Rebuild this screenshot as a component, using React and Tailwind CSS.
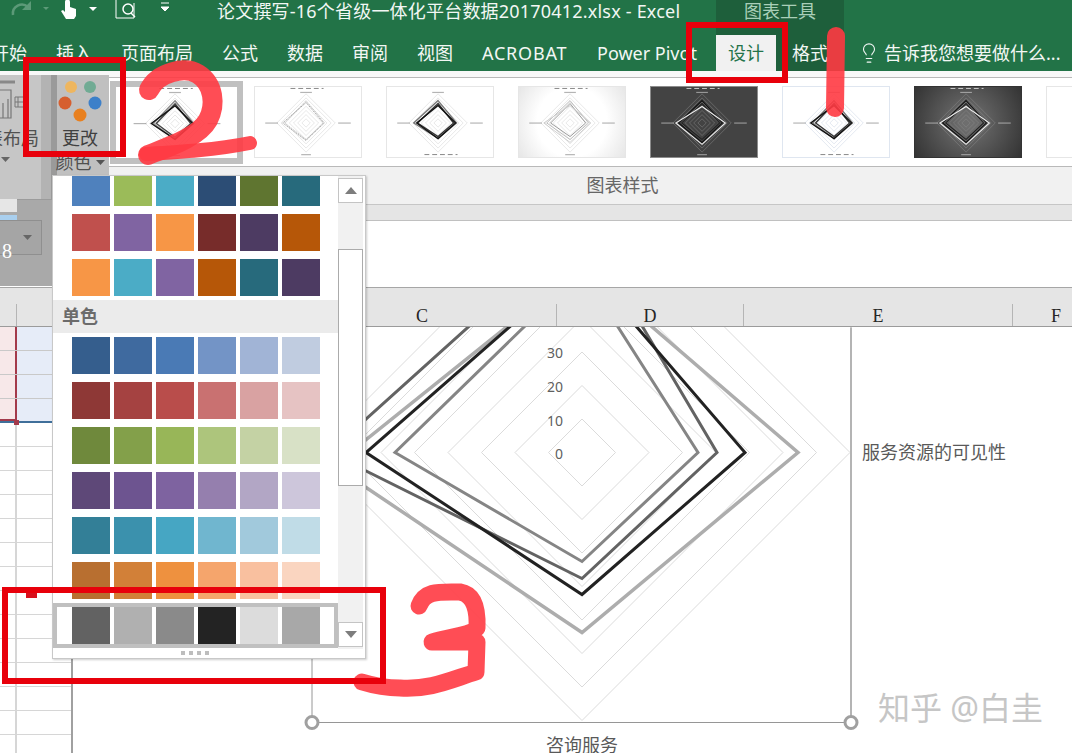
import React from 'react';
import { Lightbulb } from 'lucide-react';

const swatchRows = {
  top: [
    ['#4f81bd', '#9bbb59', '#4bacc6', '#2c4d75', '#5f7530', '#276a7c'],
    ['#c0504d', '#8064a2', '#f79646', '#772c2a', '#4d3b62', '#b65708'],
    ['#f79646', '#4bacc6', '#8064a2', '#b65708', '#276a7c', '#4d3b62'],
  ],
  mono: [
    ['#355e8d', '#3f6a9f', '#4a7ab5', '#7394c6', '#a1b4d6', '#c0cce0'],
    ['#8e3836', '#a54241', '#b94d4b', '#c97171', '#d9a2a2', '#e6c3c3'],
    ['#6f893c', '#83a04a', '#98b658', '#adc57c', '#c4d2a4', '#d8e1c6'],
    ['#5e4878', '#6d5490', '#7e63a0', '#957fae', '#b2a6c5', '#cdc6db'],
    ['#337f97', '#3b91ad', '#46a6c3', '#70b6cf', '#a1c9dc', '#c0dce7'],
    ['#b86f30', '#d28038', '#ee913f', '#f5a56c', '#f9c09f', '#fad5c0'],
  ],
  gray: ['#626262', '#b0b0b0', '#8a8a8a', '#232323', '#dcdcdc', '#a8a8a8'],
};

const tabs = [
  { label: '插入', cls: 'w-[36px]' },
  { label: '页面布局', cls: 'w-[72px]' },
  { label: '公式', cls: 'w-[36px]' },
  { label: '数据', cls: 'w-[36px]' },
  { label: '审阅', cls: 'w-[36px]' },
  { label: '视图', cls: 'w-[36px]' },
  { label: 'ACROBAT', cls: 'w-[86px] tracking-[0.8px]' },
  { label: 'Power Pivot', cls: 'w-[100px]' },
];

const thumbs = [
  { box: 'bg-white border-[#e6e6e6]', ring: '#cfcfcf', mark: '#777', legend: 'top', width: 0.9, series: [[23, 19, 17, 22, '#bbb'], [21, 18, 18, 24, '#999']], dash: true },
  { box: 'bg-white border-[#e6e6e6]', ring: '#cfcfcf', mark: '#777', legend: 'bottom', width: 1.4, series: [[23, 19, 16, 25, '#777'], [20, 16, 14, 21, '#333'], [18, 18, 16, 22, '#111']] },
  { box: 'bg-[radial-gradient(circle,#ffffff_55%,#e6e6e6_100%)] border-[#e6e6e6]', ring: '#cfcfcf', mark: '#777', legend: 'top', width: 1, series: [[23, 19, 17, 24, '#bbb'], [20, 16, 14, 20, '#999'], [18, 21, 20, 27, '#ccc']] },
  { box: 'bg-[#434343] border-[#8c8c8c]', ring: '#8a8a8a', mark: '#ddd', legend: 'top', width: 1.1, series: [[23, 21, 20, 24, '#111'], [20, 18, 17, 21, '#222'], [17, 24, 22, 27, '#eee']] },
  { box: 'bg-white border-[#dfe6f0]', ring: '#c6d2e2', mark: '#777', legend: 'bottom', width: 1.4, series: [[23, 19, 16, 22, '#777'], [20, 16, 14, 19, '#333'], [18, 18, 16, 24, '#111']] },
  { box: 'bg-[radial-gradient(circle,#6e6e6e_10%,#333333_100%)] border-[#333333]', ring: '#8a8a8a', mark: '#ddd', legend: 'top', width: 1.1, series: [[23, 21, 20, 24, '#111'], [20, 18, 17, 21, '#222'], [17, 24, 22, 27, '#eee']] },
];

// points of a radar polygon, given the reach on each of the four axes
const diamond = (cx, cy, t, r, b, l) =>
  `${cx},${cy - t} ${cx + r},${cy} ${cx},${cy + b} ${cx - l},${cy}`;

const MiniRadar = ({ ring, mark, series, dash, legend, width }) => (
  <svg viewBox="0 0 108 72" className="block w-full h-full">
    {[4.300, 8.600, 12.900, 17.200, 21.500, 25.800, 30].map((r) => (
      <polygon key={r} points={diamond(52, 37, r, r, r, r)} fill="none" stroke={ring} strokeWidth="0.5" />
    ))}
    {series.map(([t, r, b, l, c], i) => (
      <polygon
        key={i}
        points={diamond(52, 37, t, r, b, l)}
        fill="none"
        stroke={c}
        strokeWidth={width}
        strokeDasharray={dash ? '1.5 0.8' : undefined}
      />
    ))}
    {/* labels too small to read in the gallery */}
    <path
      d={legend === 'top' ? 'M36 1.500H70' : 'M38 69.500H72'}
      stroke={mark}
      strokeWidth="0.9"
      strokeDasharray="5 3"
    />
    <rect x="46" y="5" width="12" height="1.200" fill={mark} opacity="0.55" />
    {legend === 'top' && <rect x="47" y="69" width="10" height="1.200" fill={mark} opacity="0.55" />}
    <rect x="10" y="36.500" width="13" height="1.200" fill={mark} opacity="0.55" />
    <rect x="85" y="36.500" width="13" height="1.200" fill={mark} opacity="0.55" />
  </svg>
);

const SwatchRow = ({ colors }) => (
  <div className="flex gap-[4.5px] h-full">
    {colors.map((c, i) => (
      <div key={i} className="w-[37.5px] h-full" style={{ backgroundColor: c }} />
    ))}
  </div>
);

const GridRow = ({ selected }) => (
  <div className={`flex h-[24px] shrink-0 border-b ${selected ? 'border-[#c9c9c9]' : 'border-[#d6d6d6]'}`}>
    <div className={`w-[17px] shrink-0 border-r-2 ${selected ? 'bg-[#f7e8e9] border-[#a33a4b]' : 'border-[#d6d6d6]'}`} />
    <div className={`flex-1 ${selected ? 'bg-[#e6ecf8]' : ''}`} />
  </div>
);

const Chart = () => (
  <svg viewBox="73 328 999 425" className="block w-full h-full">
    {[33.5, 67, 100.5, 134, 167.5, 201, 234.5, 268].map((r) => (
      <polygon key={r} points={diamond(582, 453, r, r, r, r)} fill="none" stroke="#dbdbdb" strokeWidth="1" />
    ))}
    <path d="M312 650V723H851V328" fill="none" stroke="#969696" strokeWidth="1" />
    <path d="M851 328V723" fill="none" stroke="#b4b4b4" strokeWidth="2" />
    <polygon points="582,267 798,453 582,633 314,453 350,453" fill="none" stroke="#adadad" strokeWidth="3.5" />
    <polygon points={diamond(582, 453, 228, 135, 126, 253)} fill="none" stroke="#636363" strokeWidth="3" />
    <polygon points={diamond(582, 453, 182, 116, 109, 187)} fill="none" stroke="#858585" strokeWidth="3" />
    <polygon points={diamond(582, 453, 189, 163, 142, 216)} fill="none" stroke="#222222" strokeWidth="3" />
    <g fill="#606060" fontSize="14" textAnchor="end">
      <text x="563" y="358">30</text>
      <text x="563" y="392">20</text>
      <text x="563" y="426">10</text>
      <text x="563" y="459">0</text>
    </g>
    <text x="862" y="459" fill="#595959" fontSize="18">服务资源的可见性</text>
    <text x="546" y="752" fill="#595959" fontSize="18">咨询服务</text>
    <circle cx="312" cy="723" r="6" fill="#ffffff" stroke="#a0a0a0" strokeWidth="3" />
    <circle cx="851" cy="723" r="6" fill="#ffffff" stroke="#a0a0a0" strokeWidth="3" />
  </svg>
);

const TitleIcons = () => (
  <svg width="217" height="35" viewBox="0 0 217 35" className="shrink-0">
    <path d="M13 15a9 9 0 0 1 15-8" fill="none" stroke="#5c9a78" strokeWidth="2.5" />
    <path d="M31 1v9h-9z" fill="#5c9a78" />
    <path d="M43 7h6l-3 3z" fill="#5c9a78" />
    <path d="M65 2a2.5 2.5 0 0 1 5 0v5l6 2v7l-2 3h-8l-5-8 2-1 2 2z" fill="#ffffff" />
    <path d="M89 7h8l-4 4z" fill="#ffffff" />
    <path d="M116 0v18h18V3" fill="none" stroke="#ffffff" strokeWidth="1" />
    <circle cx="128" cy="9" r="5" fill="none" stroke="#ffffff" strokeWidth="1.5" />
    <path d="M131 13l4 4" stroke="#ffffff" strokeWidth="1.5" />
    <path d="M161 3h8M161 7h8l-4 4z" stroke="#ffffff" strokeWidth="1" fill="#ffffff" />
  </svg>
);

const DimmedPanel = () => (
  <div className="absolute left-0 top-[75px] w-[57px] h-[211px] bg-[#a9a9a9] overflow-hidden">
    <div className="flex h-[125px] border-b border-[#9b9b9b]">
      <div className="w-[41px] shrink-0 bg-[#c6c6c6] flex flex-col">
        <svg width="41" height="48" viewBox="0 0 41 48" className="shrink-0">
          <path d="M0 7H15" fill="none" stroke="#888" strokeWidth="3" />
          <path d="M0 15H11V43H0M3 28V43M8 24V43" fill="none" stroke="#777" strokeWidth="1.2" />
          <path d="M15 22H24V32H15ZM15 27H24M18 22V32" fill="none" stroke="#777" strokeWidth="1" />
        </svg>
        <span className="-ml-[15px] mt-[3px] text-[18px] leading-[24px] text-[#505050] whitespace-nowrap">表布局</span>
        <svg width="10" height="6" className="ml-[1px] mt-[7px]"><path d="M0 0h9l-4.500 5z" fill="#666" /></svg>
      </div>
      <div className="w-[10px] bg-[#b3b3b3]" />
      <div className="flex-1 bg-[#9a9a9a]" />
    </div>
    <div className="w-[17px] h-[14px] -mt-[2px] bg-[#e6e6e6]" />
    <div className="mt-[3px] w-[17px] h-[8px] bg-[#a9cfee]" />
    <div className="-mt-[3px] w-[42px] h-[35px] border border-[#8f8f8f] border-l-0 bg-[#a5a5a5] flex items-start justify-between pl-[2px] pr-[8px]">
      <span className="font-['Liberation_Serif',serif] text-[20px] leading-[24px] mt-[18px] text-white">8</span>
      <svg width="10" height="6" className="mt-[14px]"><path d="M0 0h9l-4.500 5z" fill="#666" /></svg>
    </div>
  </div>
);

const ChangeColorButton = () => (
  <div className="absolute left-[57px] top-[75px] w-[52px] h-[101px] bg-[#c0c0c0] flex flex-col items-center pr-[6px]">
    <svg width="52" height="50" viewBox="57 75 52 50" className="shrink-0 -mr-[6px]">
      <circle cx="71" cy="87" r="6" fill="#eeb65f" />
      <circle cx="90" cy="87" r="6" fill="#71ab94" />
      <circle cx="65" cy="103" r="6.500" fill="#d65f2f" />
      <circle cx="95" cy="103" r="6.500" fill="#3d80c9" />
      <circle cx="80" cy="115" r="6.500" fill="#e8801f" />
    </svg>
    <span className="text-[18px] leading-[24px] mt-[1px] text-[#404040] whitespace-nowrap">更改</span>
    <span className="flex items-center gap-[4px] text-[18px] leading-[24px] text-[#505050] whitespace-nowrap shrink-0">
      颜色
      <svg width="9" height="5" className="shrink-0"><path d="M0 0h9l-4.500 5z" fill="#555" /></svg>
    </span>
  </div>
);

const ScrollButton = ({ up }) => (
  <div className="h-[25px] border border-[#c4c4c4] bg-white flex items-center justify-center">
    <svg width="12" height="7">
      <path d={up ? 'M6 0l6 7H0z' : 'M0 0h12L6 7z'} fill="#7d7d7d" />
    </svg>
  </div>
);

const ColorPopup = () => (
  <div className="absolute left-[52px] top-[175px] w-[314px] h-[484px] bg-white border border-[#c8c8c8] shadow-[1px_1px_2px_rgba(0,0,0,0.2)] flex flex-col overflow-hidden">
    <div className="flex h-[473px] shrink-0">
      <div className="w-[285px] shrink-0 flex flex-col">
        <div className="h-[30px] pl-[19px]"><SwatchRow colors={swatchRows.top[0]} /></div>
        <div className="h-[37px] mt-[8px] pl-[19px]"><SwatchRow colors={swatchRows.top[1]} /></div>
        <div className="h-[37px] mt-[8px] pl-[19px]"><SwatchRow colors={swatchRows.top[2]} /></div>
        <div className="h-[33px] mt-[4px] bg-[#ebebeb] flex items-center pl-[9px] text-[18px] font-bold text-[#6b6b6b]">单色</div>
        <div className="mt-[4px] flex flex-col gap-[8px]">
          {swatchRows.mono.map((row, i) => (
            <div key={i} className="h-[37px] pl-[19px]"><SwatchRow colors={row} /></div>
          ))}
        </div>
        <div className="h-[45px] mt-[4px] border-[4px] border-[#c0c0c0] pl-[15px]">
          <SwatchRow colors={swatchRows.gray} />
        </div>
      </div>
      <div className="w-[25px] shrink-0 bg-[#f1f1f1] flex flex-col">
        <div className="mt-[2px]"><ScrollButton up /></div>
        <div className="h-[237px] mt-[46px] border border-[#ababab] bg-white" />
        <div className="mt-[136px]"><ScrollButton /></div>
      </div>
    </div>
    <div className="flex justify-center gap-[4px] pr-[28px] pt-[2px]">
      {[0, 1, 2, 3].map((i) => (
        <div key={i} className="w-[4px] h-[4px] bg-[#bdbdbd]" />
      ))}
    </div>
  </div>
);

const Scribbles = () => (
  <svg viewBox="0 0 1072 753" className="absolute inset-0 w-full h-full pointer-events-none">
    <g fill="none" stroke="#ff3a42" strokeOpacity="0.9" strokeLinecap="round" strokeLinejoin="round">
      <path strokeWidth="20" d="M149 90C158 72 185 66 198 74C214 84 216 105 208 120C198 138 165 148 148 155" />
      <path strokeWidth="14" d="M146 154C180 152 215 150 250 143" />
      <path strokeWidth="18" d="M836 36L835 108" />
      <path strokeWidth="17" d="M419 606C425 590 440 592 460 592C472 594 478 605 477 628C470 636 450 636 432 642H477L476 672C450 680 430 690 400 688C385 688 375 686 362 682" />
    </g>
  </svg>
);

export default function App() {
  return (
    <div className="relative w-[1072px] h-[753px] overflow-hidden bg-white flex flex-col font-['Noto_Sans','Noto_Sans_CJK_SC',sans-serif]">
      {/* title bar */}
      <div className="flex h-[35px] shrink-0 bg-[#227347] text-white">
        <TitleIcons />
        <div className="w-[499px] shrink-0 text-[18px] leading-[22px] tracking-[0.2px] whitespace-nowrap text-[#f2f7f4]">
          论文撰写-16个省级一体化平台数据20170412.xlsx - Excel
        </div>
        <div className="w-[128px] shrink-0 bg-[#1e5f3b] text-center text-[18px] leading-[22px] text-[#a9cfb8]">图表工具</div>
      </div>

      {/* ribbon tabs */}
      <div className="flex h-[36px] shrink-0 bg-[#227347] text-[18px] text-[#f2f7f4] items-stretch">
        <div className="-ml-[9px] w-[36px] shrink-0 leading-[36px]">开始</div>
        {tabs.map((t) => (
          <div key={t.label} className={`ml-[29px] shrink-0 leading-[36px] whitespace-nowrap ${t.cls}`}>{t.label}</div>
        ))}
        <div className="ml-[19px] w-[60px] shrink-0 bg-[#f1f1f1] text-[#24734a] text-center leading-[36px]">设计</div>
        <div className="w-[68px] shrink-0 bg-[#1e5f3b] pl-[16px] leading-[36px]">格式</div>
        <div className="ml-[14px] flex items-center gap-[4px] whitespace-nowrap">
          <Lightbulb size={22} strokeWidth={1.2} />
          <span>告诉我您想要做什么...</span>
        </div>
      </div>

      <div className="h-[6px] shrink-0 bg-[#f8f8f8]" />

      {/* chart styles gallery */}
      <div className="flex items-center h-[90px] shrink-0 pl-[110px] gap-[11px] bg-white border-y border-[#b9b9b9]">
        <div className="w-[133px] h-[83px] shrink-0 border-[6px] border-[#c0c0c0] flex justify-center items-center bg-white">
          <div className="w-[108px] h-[71px]">
            <MiniRadar ring="#cfcfcf" mark="#777" legend="top" width={1.4} series={[[23, 19, 16, 22, '#888'], [20, 16, 14, 19, '#444'], [18, 18, 16, 24, '#111']]} />
          </div>
        </div>
        <div className="flex gap-[24px] shrink-0">
          {thumbs.map((t, i) => (
            <div key={i} className={`w-[108px] h-[72px] shrink-0 border ${t.box}`}>
              <MiniRadar ring={t.ring} mark={t.mark} series={t.series} dash={t.dash} legend={t.legend} width={t.width} />
            </div>
          ))}
          <div className="w-[108px] h-[72px] shrink-0 border border-[#e6e6e6] bg-white" />
        </div>
      </div>

      <div className="h-[38px] shrink-0 bg-[#f1f1f1] flex items-center justify-center pl-[173px] text-[18px] text-[#666666] border-b border-[#c6c6c6]">
        图表样式
      </div>
      <div className="h-[16px] shrink-0 bg-[#e5e5e5] border-b border-[#c0c0c0]" />
      <div className="h-[66px] shrink-0 bg-white" />

      {/* column headers */}
      <div className="flex h-[40px] shrink-0 bg-[#e5e5e5] border-y border-[#a6a6a6] border-b-[#9b9b9b] font-['Liberation_Serif',serif] text-[18px] leading-[24px] text-[#262626] items-end">
        <div className="w-[17px] h-[22px] shrink-0 border-r border-[#b5b5b5]" />
        <div className="w-[540px] shrink-0 h-[22px] border-r border-[#b5b5b5] text-center pl-[271px]">C</div>
        <div className="w-[187px] shrink-0 h-[22px] border-r border-[#b5b5b5] text-center">D</div>
        <div className="w-[269px] shrink-0 h-[22px] border-r border-[#b5b5b5] text-center">E</div>
        <div className="w-[86px] shrink-0 h-[22px] text-center">F</div>
      </div>

      {/* sheet */}
      <div className="flex-1 min-h-0 flex">
        <div className="relative w-[73px] shrink-0 border-r-2 border-[#a0a0a0] flex flex-col overflow-hidden">
          <GridRow selected />
          <GridRow selected />
          <GridRow selected />
          <div className="flex h-[24px] shrink-0 border-b-2 border-[#3f6f9a]">
            <div className="w-[17px] shrink-0 bg-[#f7e8e9] border-r-2 border-[#a33a4b] border-b-2 border-b-[#a33a4b]" />
            <div className="flex-1 bg-[#e6ecf8]" />
          </div>
          {Array.from({ length: 14 }).map((_, i) => (
            <GridRow key={i} />
          ))}
          <div className="absolute left-[14px] top-[93px] w-[5px] h-[5px] bg-[#a33a4b]" />
        </div>
        <div className="flex-1 min-w-0">
          <Chart />
        </div>
      </div>

      {/* overlays */}
      <DimmedPanel />
      <ChangeColorButton />
      <ColorPopup />
      <div className="absolute left-[26px] top-[593px] w-[11px] h-[5px] bg-[#d8101c]" />
      <div className="absolute right-[29px] top-[688px] text-[32px] leading-[40px] text-[#c6c6c6] whitespace-nowrap">知乎 @白圭</div>
      <Scribbles />
      <div className="absolute left-[686px] top-[22px] w-[102px] h-[61px] border-[6px] border-[#e8000b]" />
      <div className="absolute left-[23px] top-[57px] w-[103px] h-[100px] border-[6px] border-[#e8000b]" />
      <div className="absolute left-[2px] top-[587px] w-[384px] h-[97px] border-[6px] border-[#e8000b]" />
    </div>
  );
}
